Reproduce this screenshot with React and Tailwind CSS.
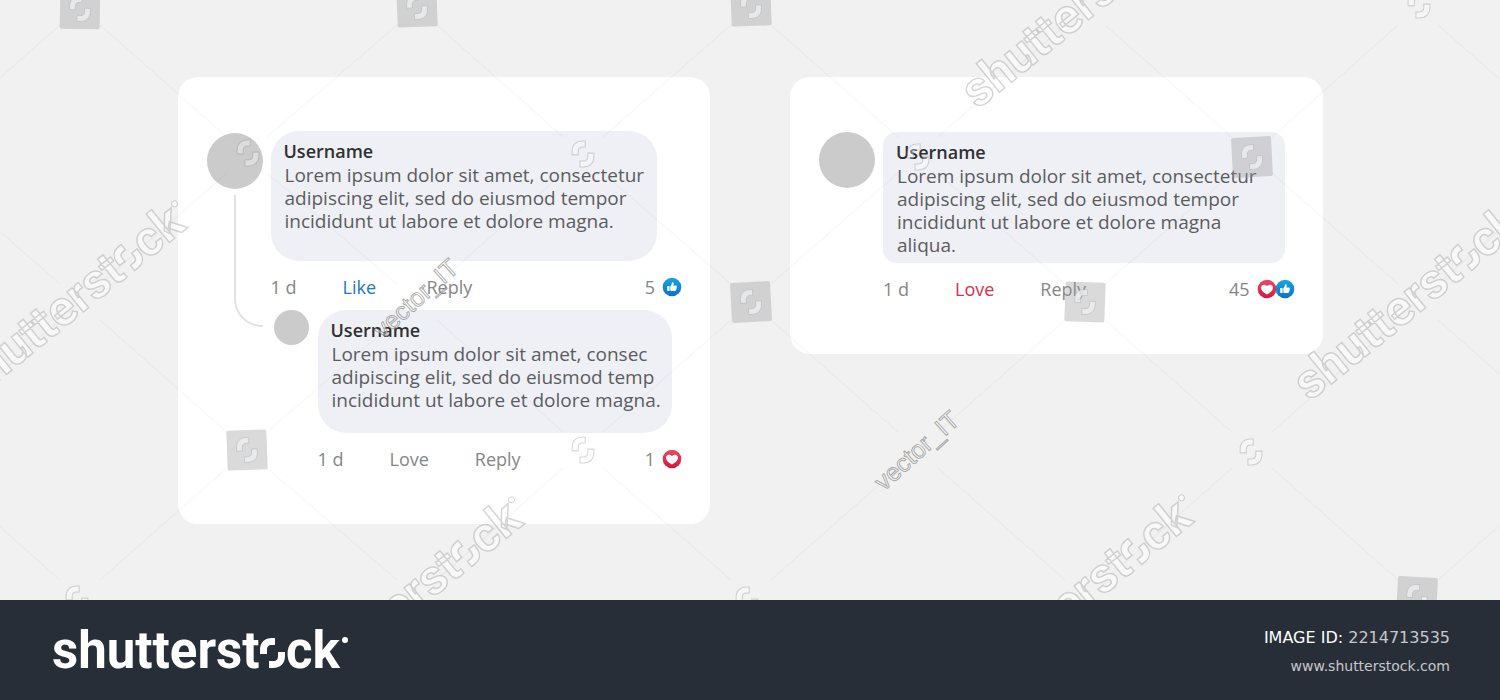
import React from "react";

const OPENING_TOP =
  "M207 -14V-18C207 -26 212 -30 219 -30H222V-23H219C215 -23 214 -21 214 -18V-14Z";
const OPENING_BOTTOM =
  "M216 -7H220C224 -7 225 -9 225 -12V-16H232V-12C232 -4 227 0 220 0H216Z";

function Opening() {
  return (
    <>
      <path d={OPENING_TOP} />
      <path d={OPENING_BOTTOM} />
    </>
  );
}

function Wordmark() {
  return (
    <g className="font-['Roboto',sans-serif] font-bold">
      <text x="-1" y="0" fontSize="51">
        shutterst
      </text>
      <Opening />
      <text x="233" y="0" fontSize="51">
        ck
      </text>
      <circle cx="292" cy="-28" r="3" strokeWidth="1" />
    </g>
  );
}

const COLS = [-87, 80, 247, 417, 583, 751, 918, 1085, 1252, 1418, 1585];
const ROWS = [7, 155, 302, 450, 598];

const SQUARES = [
  [80, 9, 1],
  [417, 7, -2],
  [751, 6, -2],
  [247, 450, -2],
  [751, 302, -3],
  [1252, 157, -3],
  [1085, 302, 2],
  [1417, 597, 3],
];
const MARKS = [
  [248, 153],
  [583, 154],
  [918, 157],
  [583, 450],
  [1251, 452],
  [1419, 5],
  [77, 599],
  [747, 600],
];
const WORDS = [
  [70, 302],
  [1075, 10],
  [1407, 302],
  [407, 598],
  [1077, 596],
];
const AUTHORS = [
  [416, 299],
  [917, 451],
];

function links() {
  const out = [];
  for (let r = 0; r < ROWS.length - 1; r++) {
    for (let c = 0; c < COLS.length; c++) {
      if ((r + c) % 2 === 0) continue;
      for (const d of [-1, 1]) {
        const x2 = COLS[c + d];
        if (x2 === undefined) continue;
        const x1 = COLS[c];
        out.push([x1 + d * 20, ROWS[r] + 18, x2 - d * 20, ROWS[r + 1] - 18]);
      }
    }
  }
  return out;
}

function Watermark() {
  return (
    <svg
      aria-hidden="true"
      className="pointer-events-none absolute inset-0 h-full w-full"
    >
      <g stroke="#000" strokeOpacity="0.028" strokeWidth="1.5">
        {links().map(([x1, y1, x2, y2]) => (
          <line key={`${x1}-${y1}-${x2}`} x1={x1} y1={y1} x2={x2} y2={y2} />
        ))}
      </g>
      {SQUARES.map(([x, y, a]) => (
        <g key={`${x}-${y}`} transform={`translate(${x} ${y}) rotate(${a})`}>
          <rect x="-20" y="-20" width="40" height="40" rx="2" fill="#9a9a9a" fillOpacity="0.37" />
          <g
            transform="scale(0.83) translate(-219.5 15)"
            fill="#eceef0"
            fillOpacity="0.8"
            stroke="#b4b7ba"
            strokeWidth="0.7"
          >
            <Opening />
          </g>
        </g>
      ))}
      {MARKS.map(([x, y]) => (
        <g
          key={`${x}-${y}`}
          transform={`translate(${x} ${y}) scale(0.87) translate(-219.5 15)`}
          fill="#fff"
          fillOpacity="0.35"
          stroke="#8a8a8a"
          strokeOpacity="0.35"
          strokeWidth="1.2"
        >
          <Opening />
        </g>
      ))}
      {WORDS.map(([x, y]) => (
        <g
          key={`${x}-${y}`}
          transform={`translate(${x} ${y}) rotate(-39) scale(0.96) translate(-143 17)`}
          fill="#fff"
          fillOpacity="0.5"
          stroke="#8a8a8a"
          strokeOpacity="0.35"
          strokeWidth="1.5"
        >
          <Wordmark />
        </g>
      ))}
      {AUTHORS.map(([x, y]) => (
        <text
          key={`${x}-${y}`}
          transform={`translate(${x} ${y}) rotate(-42)`}
          y="8"
          textAnchor="middle"
          fontSize="25"
          fill="#fff"
          fillOpacity="0.5"
          stroke="#777"
          strokeOpacity="0.6"
          strokeWidth="1"
          className="font-['Liberation_Sans',sans-serif]"
        >
          vector_IT
        </text>
      ))}
    </svg>
  );
}

function LikeBadge() {
  return (
    <svg viewBox="0 0 20 20" className="h-5 w-5" role="img" aria-label="Like">
      <defs>
        <linearGradient id="like-fill" x1="0" y1="0" x2="0" y2="1">
          <stop offset="0" stopColor="#16a6e0" />
          <stop offset="1" stopColor="#0b6fd0" />
        </linearGradient>
      </defs>
      <circle cx="10" cy="10" r="9.3" fill="url(#like-fill)" />
      <rect x="5.2" y="9" width="2.4" height="5" rx="0.5" fill="#fff" />
      <path
        fill="#fff"
        d="M8.3 9.2C9.3 8.3 9.8 7.3 9.8 5.9C9.8 4.9 11.7 5 11.7 6.7C11.7 7.5 11.5 8 11.3 8.5H14C15 8.5 15.2 9.6 14.6 10C15 10.5 14.9 11.2 14.4 11.5C14.7 12 14.4 12.7 13.9 12.9C14 13.6 13.6 14 12.8 14H10.5C9.6 14 9 13.8 8.3 13.4Z"
      />
    </svg>
  );
}

function LoveBadge() {
  return (
    <svg viewBox="0 0 20 20" className="relative z-10 h-5 w-5" role="img" aria-label="Love">
      <defs>
        <linearGradient id="love-fill" x1="0" y1="0" x2="0" y2="1">
          <stop offset="0" stopColor="#ea4a68" />
          <stop offset="1" stopColor="#d3173c" />
        </linearGradient>
      </defs>
      <circle cx="10" cy="10" r="9.3" fill="url(#love-fill)" />
      <path
        fill="#fff"
        d="M10 15.6C6.600 13.600 4 11.600 4 8.600C4 5.500 8.300 4.700 10 7.300C11.700 4.700 16 5.500 16 8.600C16 11.600 13.400 13.600 10 15.600Z"
      />
    </svg>
  );
}

function Actions({ reaction, tone, count, children }) {
  return (
    <div className="mt-[14px] flex items-center text-[18px] leading-6 text-[#868686]">
      <div className="flex gap-[46px]">
        <span>1 d</span>
        <button type="button" className={`min-w-[38px] text-left ${tone}`}>
          {reaction}
        </button>
        <button type="button">Reply</button>
      </div>
      <div className="ml-auto flex items-center gap-[7px]">
        <span>{count}</span>
        <span className="flex -space-x-[2px]">{children}</span>
      </div>
    </div>
  );
}

function Bubble({ lines, className }) {
  return (
    <div className={`bg-[#eff0f5] pt-2 pl-[13px] ${className}`}>
      <h2 className="text-[18px] leading-[25px] font-semibold text-[#303033]">Username</h2>
      <p className="pl-px text-[19px] leading-[23px] whitespace-nowrap text-[#5c5c5f]">
        {lines.map((line) => (
          <span key={line} className="block">
            {line}
          </span>
        ))}
      </p>
    </div>
  );
}

export default function App() {
  return (
    <div className="flex min-h-screen flex-col bg-[#f1f1f1] font-['Open_Sans',sans-serif]">
      <main className="relative grow overflow-hidden">
        <div className="mx-auto grid max-w-[1145px] grid-cols-2 items-start gap-20 pt-[77px] pb-[76px]">
          <section className="rounded-[20px] bg-white pt-[54px] pr-7 pb-[53px] pl-[29px]">
            <article className="flex gap-2">
              <div className="flex w-14 shrink-0 flex-col items-end">
                <div className="mt-[2px] h-14 w-14 rounded-full bg-[#cbcbcb]" />
                <div className="mt-[6px] h-[132px] w-[29px] rounded-bl-[28px] border-b-2 border-l-2 border-[#e2e2e2]" />
              </div>
              <div className="grow">
                <Bubble
                  className="mr-[25px] min-h-[130px] rounded-[28px]"
                  lines={[
                    "Lorem ipsum dolor sit amet, consectetur",
                    "adipiscing elit, sed do eiusmod tempor",
                    "incididunt ut labore et dolore magna.",
                  ]}
                />
                <Actions reaction="Like" tone="text-[#2078c8]" count="5">
                  <LikeBadge />
                </Actions>
                <article className="mt-[11px] ml-[3px] flex gap-[9px]">
                  <div className="h-[35px] w-[35px] shrink-0 rounded-full bg-[#cbcbcb]" />
                  <div className="grow">
                    <Bubble
                      className="mr-[10px] min-h-[123px] rounded-[28px]"
                      lines={[
                        "Lorem ipsum dolor sit amet, consec",
                        "adipiscing elit, sed do eiusmod temp",
                        "incididunt ut labore et dolore magna.",
                      ]}
                    />
                    <Actions reaction="Love" tone="" count="1">
                      <LoveBadge />
                    </Actions>
                  </div>
                </article>
              </div>
            </article>
          </section>

          <section className="rounded-[20px] bg-white pt-[55px] pr-7 pb-[53px] pl-[29px]">
            <article className="flex gap-2">
              <div className="h-14 w-14 shrink-0 rounded-full bg-[#cbcbcb]" />
              <div className="grow">
                <Bubble
                  className="mr-[10px] min-h-[131px] rounded-[14px]"
                  lines={[
                    "Lorem ipsum dolor sit amet, consectetur",
                    "adipiscing elit, sed do eiusmod tempor",
                    "incididunt ut labore et dolore magna",
                    "aliqua.",
                  ]}
                />
                <Actions reaction="Love" tone="text-[#d8304f]" count="45">
                  <LoveBadge />
                  <LikeBadge />
                </Actions>
              </div>
            </article>
          </section>
        </div>
        <Watermark />
      </main>

      <footer className="flex h-[100px] items-center justify-between bg-[#282e38] pr-[50px] pl-[53px]">
        <svg
          viewBox="0 -44 300 52"
          className="h-[52px] w-[300px]"
          fill="#fff"
          role="img"
          aria-label="shutterstock"
        >
          <Wordmark />
        </svg>
        <div className="pt-1 text-right font-['DejaVu_Sans',sans-serif] text-[#c6c8cb]">
          <p className="text-[16px] leading-[29px]">
            <span className="text-white">IMAGE ID:</span> 2214713535
          </p>
          <a href="#" className="block text-[14px] leading-[29px]">
            www.shutterstock.com
          </a>
        </div>
      </footer>
    </div>
  );
}
